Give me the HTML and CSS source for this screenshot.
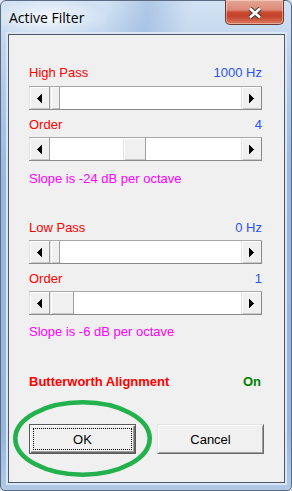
FILE: index.html
```html
<!DOCTYPE html>
<html>
<head>
<meta charset="utf-8">
<title>Active Filter</title>
<link rel="stylesheet" href="styles.css">
</head>
<body>
<div class="window">
  <div class="titlebar">
    <span class="title">Active Filter</span>
    <div class="close">
      <svg width="16" height="12" viewBox="0 0 16 12">
        <path d="M3 1.5 L13 10.5 M13 1.5 L3 10.5" stroke="#3b3b3b" stroke-width="4.6" fill="none"/>
        <path d="M3 1.5 L13 10.5 M13 1.5 L3 10.5" stroke="#ffffff" stroke-width="2.6" fill="none"/>
      </svg>
    </div>
  </div>
  <div class="client">
    <div class="row"><span class="lbl">High Pass</span><span class="val">1000 Hz</span></div>
    <div class="sb sb-first">
      <div class="sbtn"><svg class="arr" width="5" height="9" viewBox="0 0 5 9"><polygon points="5,0 5,9 0,4.5" fill="#000"/></svg></div>
      <div class="track"><div class="thumb" style="margin-left:0px;width:10px"></div></div>
      <div class="sbtn sbtn-r"><svg class="arr" width="5" height="9" viewBox="0 0 5 9"><polygon points="0,0 0,9 5,4.5" fill="#000"/></svg></div>
    </div>
    <div class="row row-after"><span class="lbl">Order</span><span class="val">4</span></div>
    <div class="sb">
      <div class="sbtn"><svg class="arr" width="5" height="9" viewBox="0 0 5 9"><polygon points="5,0 5,9 0,4.5" fill="#000"/></svg></div>
      <div class="track"><div class="thumb" style="margin-left:73px;width:23px"></div></div>
      <div class="sbtn sbtn-r"><svg class="arr" width="5" height="9" viewBox="0 0 5 9"><polygon points="0,0 0,9 5,4.5" fill="#000"/></svg></div>
    </div>
    <div class="slope slope-1">Slope is -24 dB per octave</div>

    <div class="row row-section"><span class="lbl">Low Pass</span><span class="val">0 Hz</span></div>
    <div class="sb">
      <div class="sbtn"><svg class="arr" width="5" height="9" viewBox="0 0 5 9"><polygon points="5,0 5,9 0,4.5" fill="#000"/></svg></div>
      <div class="track"><div class="thumb" style="margin-left:0px;width:10px"></div></div>
      <div class="sbtn sbtn-r"><svg class="arr" width="5" height="9" viewBox="0 0 5 9"><polygon points="0,0 0,9 5,4.5" fill="#000"/></svg></div>
    </div>
    <div class="row row-after"><span class="lbl">Order</span><span class="val">1</span></div>
    <div class="sb">
      <div class="sbtn"><svg class="arr" width="5" height="9" viewBox="0 0 5 9"><polygon points="5,0 5,9 0,4.5" fill="#000"/></svg></div>
      <div class="track"><div class="thumb" style="margin-left:0px;width:24px"></div></div>
      <div class="sbtn sbtn-r"><svg class="arr" width="5" height="9" viewBox="0 0 5 9"><polygon points="0,0 0,9 5,4.5" fill="#000"/></svg></div>
    </div>
    <div class="slope slope-2">Slope is -6 dB per octave</div>

    <div class="row row-bw"><span class="bw">Butterworth Alignment</span><span class="on">On</span></div>

    <div class="btns">
      <div class="pb pb-default"><span class="focus">OK</span></div>
      <div class="pb">Cancel</div>
    </div>
  </div>
  <svg class="mark" width="140" height="78" viewBox="0 0 140 78">
    <ellipse cx="69.5" cy="38.5" rx="67.2" ry="36.2" fill="none" stroke="#22b14c" stroke-width="4.6"/>
  </svg>
</div>
</body>
</html>
```

FILE: styles.css
```css
html, body {
  margin: 0;
  padding: 0;
}
body {
  width: 292px;
  height: 491px;
  overflow: hidden;
  background: #dde6f0;
  font-family: "Liberation Sans", Arial, sans-serif;
}
.window {
  position: relative;
  box-sizing: border-box;
  width: 292px;
  height: 491px;
  border: 1px solid #5a6b83;
  border-radius: 6px 6px 5px 5px;
  padding: 0 6px 7px 7px;
  display: flex;
  flex-direction: column;
  background:
    radial-gradient(ellipse 62px 20px at 46px 17px, rgba(255,255,255,0.8), rgba(255,255,255,0) 100%),
    linear-gradient(100deg, rgba(255,255,255,0) 36%, rgba(120,158,210,0.38) 50%, rgba(255,255,255,0) 64%) 0 0 / 100% 34px no-repeat,
    linear-gradient(#d2e2f3 0, #c4d8ee 34px, #b0c9e7 90px, #9bb9de 170px, #98b6db 430px, #b0c9e7 100%);
}
.titlebar {
  height: 33px;
  display: flex;
  align-items: flex-start;
  flex: none;
}
.title {
  margin: 7px 0 0 1px;
  font-family: "Open Sans", "Noto Sans", sans-serif;
  font-size: 14px;
  line-height: 19px;
  color: #000;
}
.close {
  margin: -1px 1px 0 auto;
  box-sizing: border-box;
  width: 59px;
  height: 25px;
  border: 1px solid #6b3a33;
  border-top: none;
  border-radius: 0 0 5px 5px;
  background: linear-gradient(#e4a898 0, #dc8a78 40%, #c9492f 52%, #c5432b 68%, #d97a5e 100%);
  box-shadow: inset 0 0 0 1px rgba(255, 235, 225, 0.45);
  display: flex;
  align-items: center;
  justify-content: center;
}
.close svg {
  display: block;
  margin-top: 1px;
}
.client {
  box-sizing: border-box;
  height: 449px;
  border: 1px solid #4a586c;
  background: #f0f0f0;
  box-shadow: 0 0 0 2px #dae6f3;
  padding: 30px 22px 0 20px;
  font-size: 13px;
}
.row {
  display: flex;
  justify-content: space-between;
  height: 15px;
  line-height: 15px;
}
.row-after { margin-top: 7px; }
.row-section { margin-top: 34px; }
.row-bw { margin-top: 35px; }
.lbl { color: #ff0000; }
.val { color: #2a52ee; }
.bw { color: #ff0000; font-weight: bold; }
.on { color: #008000; font-weight: bold; margin-right: 1px; }
.slope {
  color: #ff00ff;
  height: 15px;
  line-height: 15px;
}
.slope-1 { margin-top: 10px; }
.slope-2 { margin-top: 9px; }

.sb {
  display: flex;
  box-sizing: border-box;
  height: 24px;
  margin-top: 5px;
  border-top: 1px solid #a8a8a8;
  border-bottom: 1px solid #8a8a8a;
  background: #fff;
}
.sb-first { margin-top: 6px; }
.sbtn {
  box-sizing: border-box;
  width: 21px;
  flex: none;
  background: #f0f0f0;
  border-left: 1px solid #e2e2e2;
  border-right: 1px solid #a0a0a0;
  box-shadow: inset 1px 1px #ffffff, inset 0 -1px #c8c8c8;
  display: flex;
  align-items: center;
  justify-content: center;
}
.sbtn-r {
  border-right: 1px solid #8a8a8a;
}
.arr {
  display: block;
  shape-rendering: crispEdges;
}
.track {
  flex: 1;
  display: flex;
  background: #fff;
}
.thumb {
  box-sizing: border-box;
  flex: none;
  background: #f0f0f0;
  border-left: 1px solid #e2e2e2;
  border-right: 1px solid #a0a0a0;
  box-shadow: inset 1px 1px #ffffff, inset 0 -1px #c8c8c8;
}

.btns {
  display: flex;
  gap: 21px;
  margin-top: 35px;
  margin-right: -2px;
}
.pb {
  box-sizing: border-box;
  width: 107px;
  height: 30px;
  background: #f0f0f0;
  border: 1px solid #e3e3e3;
  border-right-color: #696969;
  border-bottom-color: #696969;
  box-shadow: inset 1px 1px #ffffff, inset -1px -1px #a0a0a0;
  display: flex;
  align-items: center;
  justify-content: center;
  font-size: 13px;
  color: #000;
}
.pb-default {
  border: 1px solid #5a5a5a;
  box-shadow: inset 1px 1px #ffffff, inset -1px -1px #696969, inset -2px -2px #a0a0a0;
  padding: 3px;
}
.focus {
  box-sizing: border-box;
  width: 100%;
  height: 100%;
  border: 1px dotted #000;
  display: flex;
  align-items: center;
  justify-content: center;
}
.mark {
  position: absolute;
  left: 12px;
  top: 399px;
  pointer-events: none;
}
```
